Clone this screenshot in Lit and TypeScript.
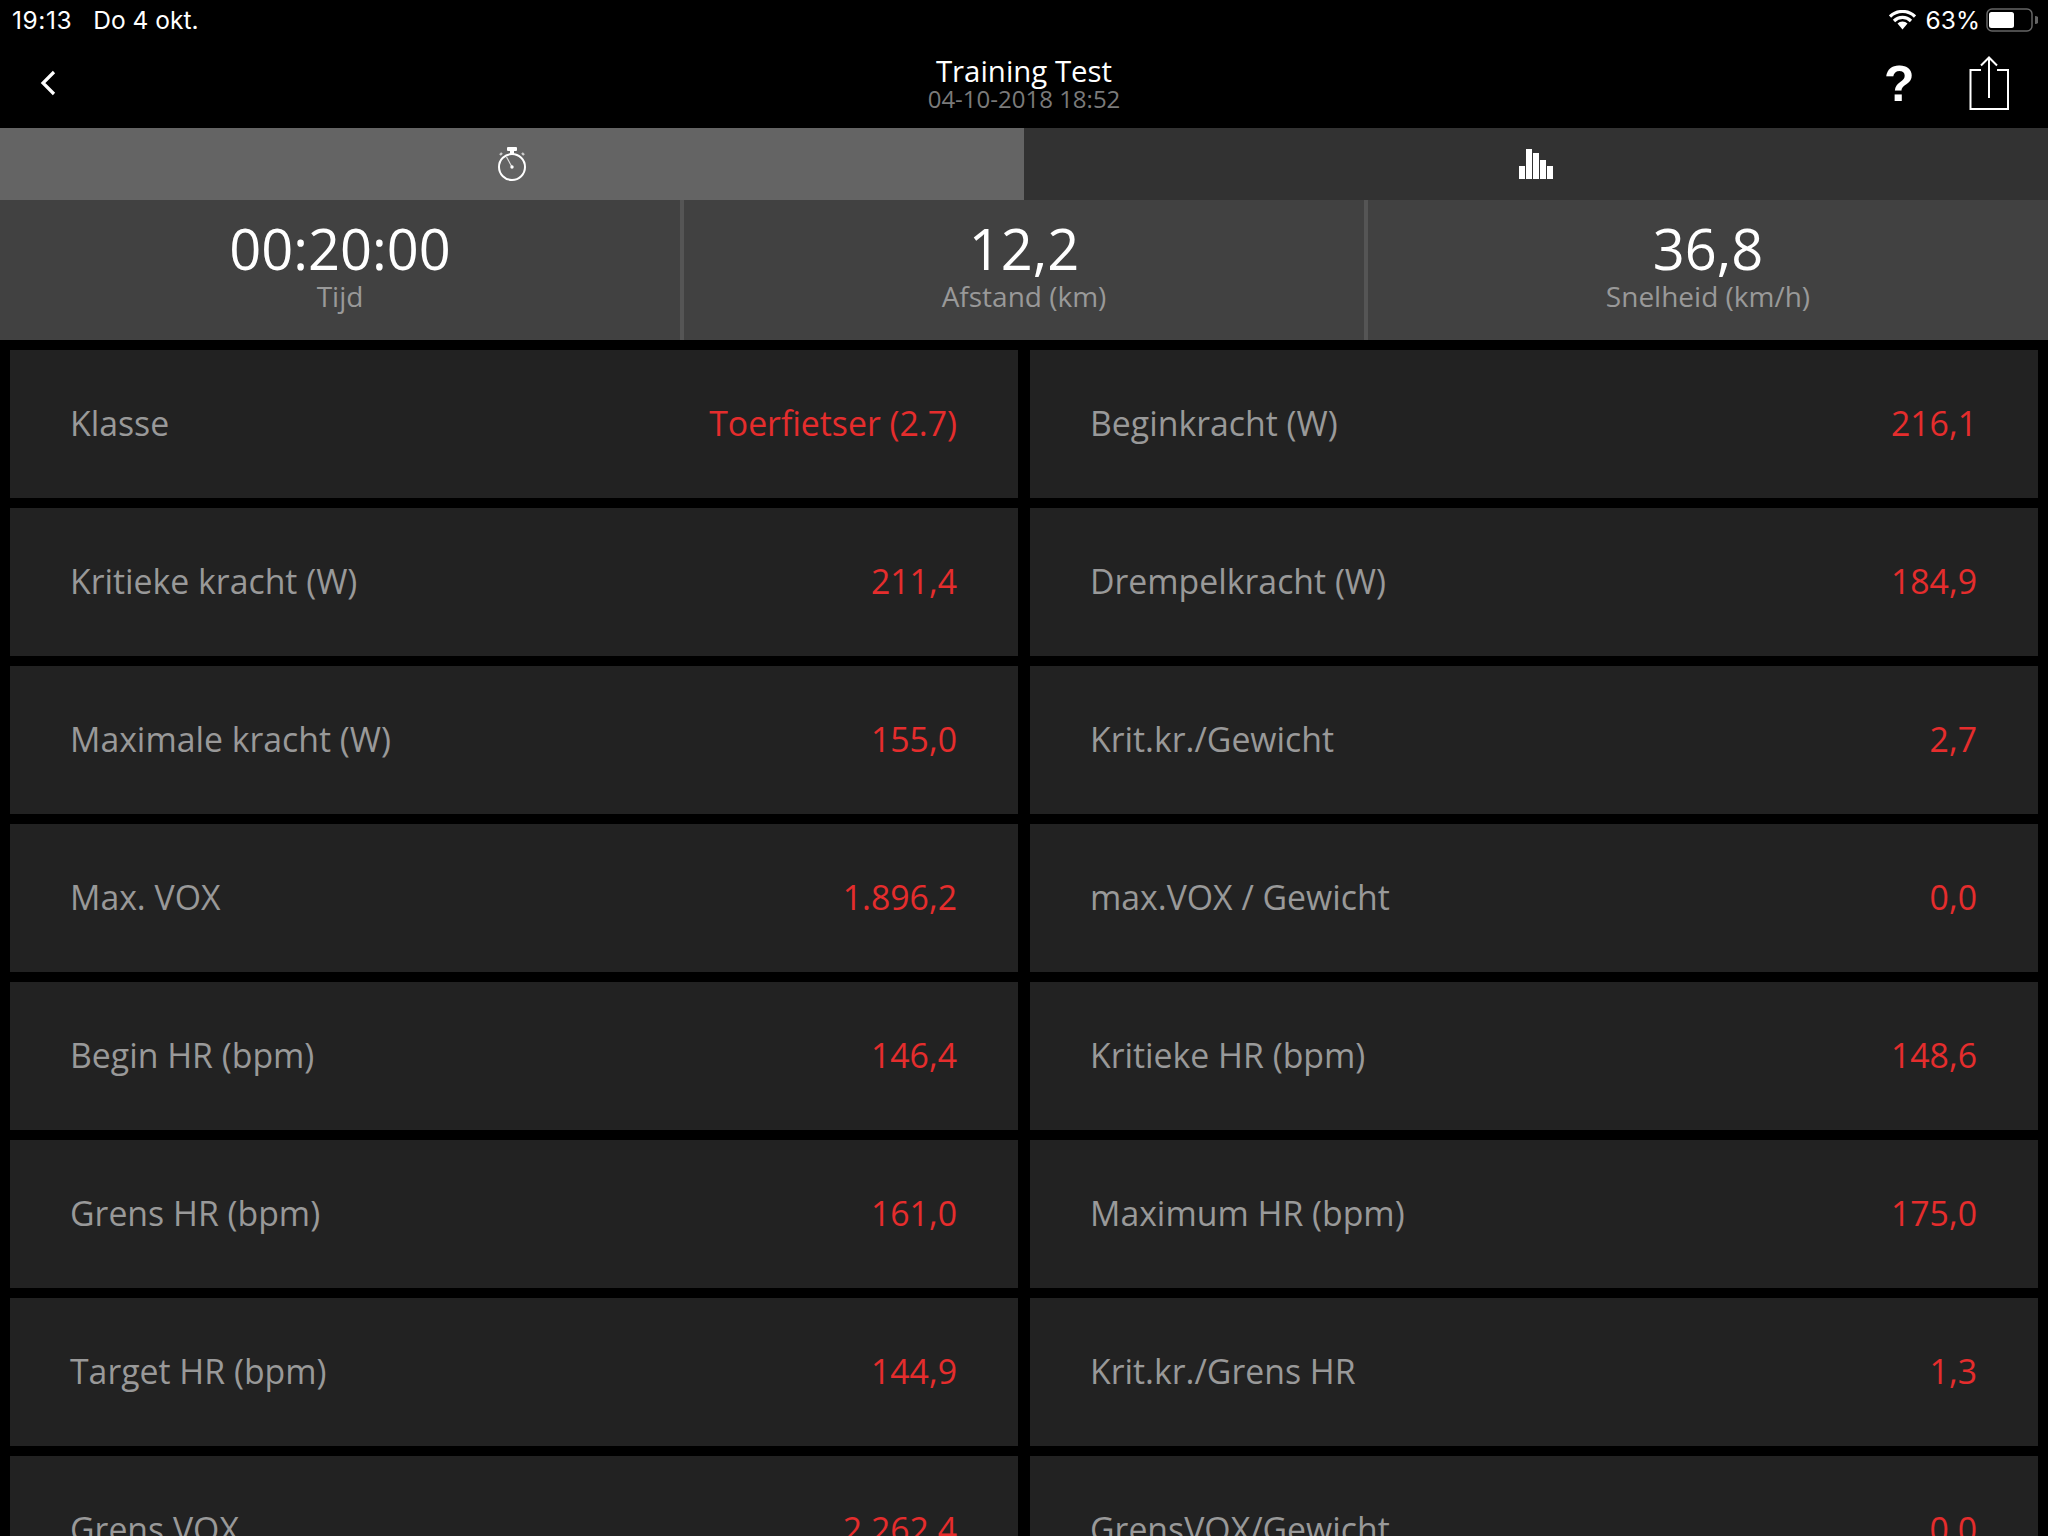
import { LitElement, html, css } from "lit";
import { customElement } from "lit/decorators.js";

const ROWS: [string, string, string, string][] = [
  ["Klasse", "Toerfietser (2.7)", "Beginkracht (W)", "216,1"],
  ["Kritieke kracht (W)", "211,4", "Drempelkracht (W)", "184,9"],
  ["Maximale kracht (W)", "155,0", "Krit.kr./Gewicht", "2,7"],
  ["Max. VOX", "1.896,2", "max.VOX / Gewicht", "0,0"],
  ["Begin HR (bpm)", "146,4", "Kritieke HR (bpm)", "148,6"],
  ["Grens HR (bpm)", "161,0", "Maximum HR (bpm)", "175,0"],
  ["Target HR (bpm)", "144,9", "Krit.kr./Grens HR", "1,3"],
  ["Grens VOX", "2.262,4", "GrensVOX/Gewicht", "0,0"],
];
const STATS = [
  ["00:20:00", "Tijd"],
  ["12,2", "Afstand (km)"],
  ["36,8", "Snelheid (km/h)"],
];

@customElement("app-root")
export class AppRoot extends LitElement {
  static styles = css`
    :host { display: block; width: 2048px; height: 1536px; overflow: hidden; background: #000; font-family: "Open Sans", sans-serif; }
    .status { height: 40px; display: flex; align-items: center; justify-content: space-between; padding: 0 10px 0 12px; color: #fff; font: 24.5px Inter, sans-serif; box-sizing: border-box; }
    .status .left { display: flex; gap: 21px; }
    .status .time { letter-spacing: 0.6px; }
    .status .right { display: flex; align-items: center; }
    .status .pct { margin: 0 6px 0 10px; }
    .batt { display: block; }
    .nav { height: 88px; position: relative; display: flex; align-items: center; justify-content: center; }
    .titles { text-align: center; margin-top: -2px; }
    .title { color: #fff; font-size: 29.4px; line-height: 30px; padding-top: 2px; }
    .sub { color: #7a7a7a; font-size: 24px; line-height: 26px; }
    .back { position: absolute; left: 39px; top: 29px; }
    .help { position: absolute; left: 1884px; top: 16px; color: #fff; font: bold 50px "Liberation Sans", sans-serif; line-height: 56px; }
    .share { position: absolute; left: 1967px; top: 16px; }
    .tabs { height: 72px; display: flex; }
    .tab { flex: 1; display: flex; align-items: center; justify-content: center; background: #323232; }
    .tab.on { background: #646464; }
    .stats { height: 140px; display: flex; background: #414141; }
    .stat { flex: 1; text-align: center; color: #fff; padding-top: 13px; box-sizing: border-box; }
    .stat + .stat { border-left: 4px solid #555; }
    .val { font-size: 56px; font-weight: 400; line-height: 64px; padding-top: 3px; }
    .lab { font-size: 28px; line-height: 32px; color: #999; }
    .grid { display: grid; grid-template-columns: 1008px 1008px; column-gap: 12px; row-gap: 10px; grid-auto-rows: 148px; padding: 10px 10px 0; }
    .card { background: #222; display: flex; align-items: center; justify-content: space-between; padding: 0 61px 2px 60px; font-size: 33.8px; color: #999; box-sizing: border-box; }
    .card .v { color: #e52d2d; }
  `;

  render() {
    return html`
      <div class="status">
        <div class="left"><span class="time">19:13</span><span>Do 4 okt.</span></div>
        <div class="right">
          <svg width="27" height="20" viewBox="0 0 27 20"><path d="M1 6.500 A18 18 0 0 1 26 6.500 M5 11 A12 12 0 0 1 22 11" fill="none" stroke="#fff" stroke-width="3.2"/><path d="M8.500 13.500 A7 7 0 0 1 18.500 13.500 L13.500 19.500 Z" fill="#fff"/></svg>
          <span class="pct">63%</span>
          <svg class="batt" width="52" height="24" viewBox="0 0 52 24"><rect x="1" y="1" width="45" height="22" rx="5" fill="none" stroke="#666" stroke-width="1.500"/><rect x="3" y="4" width="25" height="16" rx="2.500" fill="#fff"/><path d="M49 8 a4 4 0 0 1 0 8z" fill="#666"/></svg>
        </div>
      </div>
      <div class="nav">
        <svg class="back" width="18" height="28" viewBox="0 0 18 28"><path d="M15 3 L4 14 L15 25" fill="none" stroke="#fff" stroke-width="3.2"/></svg>
        <div class="titles"><div class="title">Training Test</div><div class="sub">04-10-2018 18:52</div></div>
        <div class="help">?</div>
        <svg class="share" width="44" height="56" viewBox="0 0 44 56"><path d="M14 14 H3.500 V53 H41 V14 H30 M22 42 V1.500 M14 9.500 L22 1.500 L30 9.500" fill="none" stroke="#fff" stroke-width="2"/></svg>
      </div>
      <div class="tabs">
        <div class="tab on">
          <svg width="32" height="36" viewBox="0 0 32 36"><circle cx="16" cy="21" r="13" fill="none" stroke="#fff" stroke-width="2"/><rect x="11" y="1" width="10" height="4" rx="1" fill="#fff"/><rect x="14" y="4" width="4" height="4" fill="#fff"/><path d="M4 9 L6 7 M28 9 L26 7" stroke="#ccc" stroke-width="2.400"/><path d="M16 21 L10.500 11" stroke="#ddd" stroke-width="1.200"/><circle cx="16" cy="21" r="1.700" fill="#fff"/></svg>
        </div>
        <div class="tab">
          <svg width="34" height="30" viewBox="0 0 34 30"><path d="M0 17 H6 V30 H0 Z M7 0 H13 V30 H7 Z M14 4 H20 V30 H14 Z M21 11 H27 V30 H21 Z M28 17 H34 V30 H28 Z" fill="#fff"/></svg>
        </div>
      </div>
      <div class="stats">
        ${STATS.map(([v, l]) => html`<div class="stat"><div class="val">${v}</div><div class="lab">${l}</div></div>`)}
      </div>
      <div class="grid">
        ${ROWS.flatMap(([a, b, c, d]) => [
          html`<div class="card"><span>${a}</span><span class="v">${b}</span></div>`,
          html`<div class="card"><span>${c}</span><span class="v">${d}</span></div>`,
        ])}
      </div>
    `;
  }
}
